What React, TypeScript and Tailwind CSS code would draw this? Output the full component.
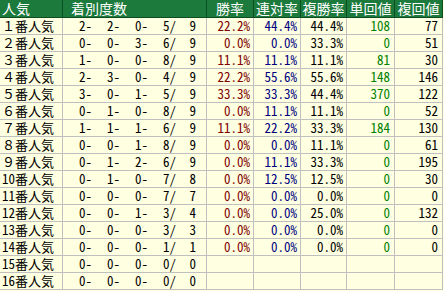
import React from "react";

type Row = {
  label: string;
  counts: string[];
  win?: string;
  ren?: string;
  fuku?: string;
  tan?: string;
  fukuKai?: string;
};

const rows: Row[] = [
  { label: "１番人気", counts: ["2-", "2-", "0-", "5/", "9"], win: "22.2%", ren: "44.4%", fuku: "44.4%", tan: "108", fukuKai: "77" },
  { label: "２番人気", counts: ["0-", "0-", "3-", "6/", "9"], win: "0.0%", ren: "0.0%", fuku: "33.3%", tan: "0", fukuKai: "51" },
  { label: "３番人気", counts: ["1-", "0-", "0-", "8/", "9"], win: "11.1%", ren: "11.1%", fuku: "11.1%", tan: "81", fukuKai: "30" },
  { label: "４番人気", counts: ["2-", "3-", "0-", "4/", "9"], win: "22.2%", ren: "55.6%", fuku: "55.6%", tan: "148", fukuKai: "146" },
  { label: "５番人気", counts: ["3-", "0-", "1-", "5/", "9"], win: "33.3%", ren: "33.3%", fuku: "44.4%", tan: "370", fukuKai: "122" },
  { label: "６番人気", counts: ["0-", "1-", "0-", "8/", "9"], win: "0.0%", ren: "11.1%", fuku: "11.1%", tan: "0", fukuKai: "52" },
  { label: "７番人気", counts: ["1-", "1-", "1-", "6/", "9"], win: "11.1%", ren: "22.2%", fuku: "33.3%", tan: "184", fukuKai: "130" },
  { label: "８番人気", counts: ["0-", "0-", "1-", "8/", "9"], win: "0.0%", ren: "0.0%", fuku: "11.1%", tan: "0", fukuKai: "61" },
  { label: "９番人気", counts: ["0-", "1-", "2-", "6/", "9"], win: "0.0%", ren: "11.1%", fuku: "33.3%", tan: "0", fukuKai: "195" },
  { label: "10番人気", counts: ["0-", "1-", "0-", "7/", "8"], win: "0.0%", ren: "12.5%", fuku: "12.5%", tan: "0", fukuKai: "30" },
  { label: "11番人気", counts: ["0-", "0-", "0-", "7/", "7"], win: "0.0%", ren: "0.0%", fuku: "0.0%", tan: "0", fukuKai: "0" },
  { label: "12番人気", counts: ["0-", "0-", "1-", "3/", "4"], win: "0.0%", ren: "0.0%", fuku: "25.0%", tan: "0", fukuKai: "132" },
  { label: "13番人気", counts: ["0-", "0-", "0-", "3/", "3"], win: "0.0%", ren: "0.0%", fuku: "0.0%", tan: "0", fukuKai: "0" },
  { label: "14番人気", counts: ["0-", "0-", "0-", "1/", "1"], win: "0.0%", ren: "0.0%", fuku: "0.0%", tan: "0", fukuKai: "0" },
  { label: "15番人気", counts: ["0-", "0-", "0-", "0/", "0"] },
  { label: "16番人気", counts: ["0-", "0-", "0-", "0/", "0"] },
];

const font = "font-['Noto_Sans_Mono_CJK_JP','Noto_Sans_CJK_JP',monospace]";

const head = "h-[18px] bg-[#1b7a3c] border-r border-b border-[#0d4d22] text-white text-[14px] leading-[17px] whitespace-nowrap";
const cell = "h-[17px] border-r border-b border-[#c0c0c0] text-[13px] leading-[16px] whitespace-nowrap";

export default function App() {
  return (
    <div className={`w-[444px] h-[291px] bg-[#ffffe1] ${font}`}>
      <div className="grid grid-cols-[63px_144px_47px_47px_46px_48px_48px] w-[443px]">
        <div className={`${head} pl-[2px]`}>人気</div>
        <div className={`${head} pl-[8px]`}>着別度数</div>
        <div className={`${head} text-center`}>勝率</div>
        <div className={`${head} text-center`}>連対率</div>
        <div className={`${head} text-center`}>複勝率</div>
        <div className={`${head} text-center`}>単回値</div>
        <div className={`${head} text-center`}>複回値</div>

        {rows.map((r) => (
          <React.Fragment key={r.label}>
            <div className={`${cell} pl-[2px] text-black`}>{r.label}</div>
            <div className={`${cell} flex pl-[1px] text-black`}>
              {r.counts.map((c, i) => (
                <span key={i} className={`${i === 4 ? "w-[20px]" : "w-[28px]"} text-right`}>
                  {c}
                </span>
              ))}
            </div>
            <div className={`${cell} text-right pr-[3px] text-[#800000]`}>{r.win}</div>
            <div className={`${cell} text-right pr-[3px] text-[#000080]`}>{r.ren}</div>
            <div className={`${cell} text-right pr-[3px] text-black`}>{r.fuku}</div>
            <div className={`${cell} text-right pr-[4px] text-[#008000]`}>{r.tan}</div>
            <div className={`${cell} text-right pr-[4px] text-black`}>{r.fukuKai}</div>
          </React.Fragment>
        ))}
      </div>
    </div>
  );
}
